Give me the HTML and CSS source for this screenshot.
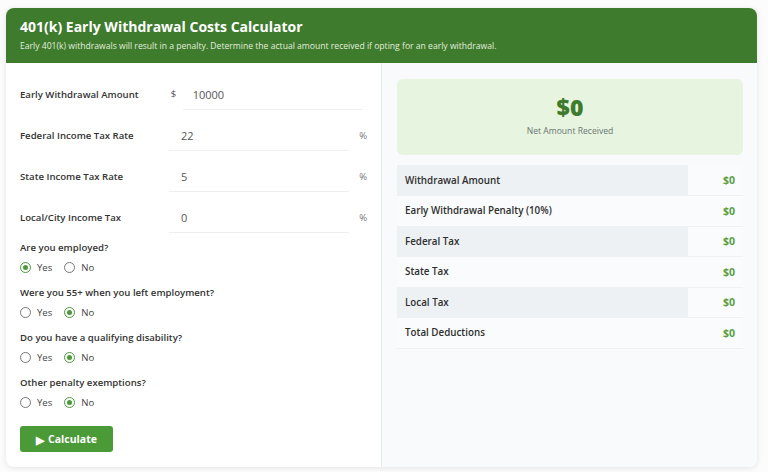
FILE: index.html
```html
<!DOCTYPE html>
<html lang="en">
<head>
<meta charset="utf-8">
<title>401(k) Early Withdrawal Costs Calculator</title>
<link rel="stylesheet" href="styles.css">
</head>
<body>
<div class="card">
  <header class="head">
    <h1 class="title">401(k) Early Withdrawal Costs Calculator</h1>
    <p class="subtitle">Early 401(k) withdrawals will result in a penalty. Determine the actual amount received if opting for an early withdrawal.</p>
  </header>
  <div class="body">
    <section class="form">
      <div class="fields">
        <div class="field">
          <label class="label">Early Withdrawal Amount</label>
          <div class="control">
            <span class="prefix">$</span>
            <input class="input first" type="text" value="10000">
          </div>
        </div>
        <div class="field">
          <label class="label">Federal Income Tax Rate</label>
          <div class="control">
            <input class="input" type="text" value="22">
            <span class="suffix">%</span>
          </div>
        </div>
        <div class="field">
          <label class="label">State Income Tax Rate</label>
          <div class="control">
            <input class="input" type="text" value="5">
            <span class="suffix">%</span>
          </div>
        </div>
        <div class="field">
          <label class="label">Local/City Income Tax</label>
          <div class="control">
            <input class="input" type="text" value="0">
            <span class="suffix">%</span>
          </div>
        </div>
      </div>

      <div class="questions">
        <div class="question">
          <div class="qlabel">Are you employed?</div>
          <div class="radios">
            <label class="radio"><span class="dot on"></span>Yes</label>
            <label class="radio"><span class="dot"></span>No</label>
          </div>
        </div>
        <div class="question">
          <div class="qlabel">Were you 55+ when you left employment?</div>
          <div class="radios">
            <label class="radio"><span class="dot"></span>Yes</label>
            <label class="radio"><span class="dot on"></span>No</label>
          </div>
        </div>
        <div class="question">
          <div class="qlabel">Do you have a qualifying disability?</div>
          <div class="radios">
            <label class="radio"><span class="dot"></span>Yes</label>
            <label class="radio"><span class="dot on"></span>No</label>
          </div>
        </div>
        <div class="question">
          <div class="qlabel">Other penalty exemptions?</div>
          <div class="radios">
            <label class="radio"><span class="dot"></span>Yes</label>
            <label class="radio"><span class="dot on"></span>No</label>
          </div>
        </div>
      </div>

      <button class="btn" type="button"><span class="play">&#9654;</span>Calculate</button>
    </section>

    <section class="results">
      <div class="summary">
        <div class="big">$0</div>
        <div class="caption">Net Amount Received</div>
      </div>
      <table class="table">
        <tr class="shade"><td class="k">Withdrawal Amount</td><td class="v">$0</td></tr>
        <tr><td class="k">Early Withdrawal Penalty (10%)</td><td class="v">$0</td></tr>
        <tr class="shade"><td class="k">Federal Tax</td><td class="v">$0</td></tr>
        <tr><td class="k">State Tax</td><td class="v">$0</td></tr>
        <tr class="shade"><td class="k">Local Tax</td><td class="v">$0</td></tr>
        <tr><td class="k">Total Deductions</td><td class="v">$0</td></tr>
      </table>
    </section>
  </div>
</div>
</body>
</html>
```

FILE: styles.css
```css
* { box-sizing: border-box; }
html, body { margin: 0; padding: 0; }
body {
  background: #fcfcfc;
  font-family: "Open Sans", "Noto Sans", sans-serif;
  color: #333;
  padding: 8px 11px 5px 6px;
}
.card {
  background: #fff;
  border-radius: 8px;
  box-shadow: 0 1px 6px rgba(0,0,0,0.10);
  overflow: hidden;
  height: 459px;
  display: flex;
  flex-direction: column;
}
.head {
  flex: 0 0 55px;
  background: #3e7b2d;
  color: #fff;
  padding: 10px 14px 0 14px;
}
.title {
  margin: 0;
  font-size: 14px;
  font-weight: 700;
  line-height: 18px;
}
.subtitle {
  margin: 4px 0 0 0;
  font-size: 8.6px;
  line-height: 12px;
  color: #e3eedd;
}
.body {
  flex: 1;
  display: flex;
  min-height: 0;
}
.form {
  width: 376px;
  padding: 11px 14px 0 14px;
  border-right: 1px solid #e6ece8;
}
.field {
  display: flex;
  align-items: center;
  height: 41px;
}
.label {
  width: 152px;
  font-size: 9.6px;
  font-weight: 600;
  color: #333;
}
.control {
  display: flex;
  align-items: center;
  width: 198px;
  height: 30px;
}
.prefix {
  width: 12px;
  font-size: 9.5px;
  color: #555;
  padding-bottom: 2px;
}
.suffix {
  width: 18px;
  text-align: right;
  font-size: 9.5px;
  color: #777;
}
.input {
  flex: 0 0 180px;
  height: 30px;
  border: 0;
  border-bottom: 1px solid #eceeef;
  background: transparent;
  font-family: inherit;
  font-size: 11px;
  color: #555;
  padding: 0 12px;
  outline: none;
}
.input.first { padding-left: 10px; }
.questions { margin-top: 3px; }
.question { height: 45px; }
.qlabel {
  font-size: 9.6px;
  font-weight: 600;
  color: #333;
  line-height: 14px;
}
.radios {
  display: flex;
  gap: 12px;
  margin-top: 6px;
  height: 12px;
}
.radio {
  display: flex;
  align-items: center;
  font-size: 9.6px;
  color: #444;
}
.dot {
  width: 11px;
  height: 11px;
  border-radius: 50%;
  border: 1px solid #777;
  background: #fff;
  margin-right: 6px;
  position: relative;
}
.dot.on { border-color: #4b9a3a; }
.dot.on::after {
  content: "";
  position: absolute;
  left: 2px; top: 2px;
  width: 5px; height: 5px;
  border-radius: 50%;
  background: #4b9a3a;
}
.btn {
  margin-top: 5px;
  width: 93px;
  height: 26px;
  border: 0;
  border-radius: 3px;
  background: #4b9a38;
  color: #fff;
  font-family: inherit;
  font-size: 10.5px;
  font-weight: 700;
  display: flex;
  align-items: center;
  justify-content: center;
  gap: 4px;
}
.play { font-size: 11px; }
.results {
  flex: 1;
  background: #f8fafb;
  padding: 16px 14px 0 15px;
}
.summary {
  background: #e6f4e0;
  border-radius: 6px;
  height: 76px;
  text-align: center;
  padding-top: 13px;
}
.big {
  font-size: 23px;
  font-weight: 800;
  color: #3e7b2d;
  line-height: 31px;
}
.caption {
  font-size: 8.6px;
  color: #6b7472;
  margin-top: 2px;
}
.table {
  width: 100%;
  margin-top: 10px;
  border-collapse: collapse;
}
.table td {
  height: 30.5px;
  border-bottom: 1px solid #eef1f3;
  font-size: 9.8px;
  padding: 0 8px;
}
.table .k { color: #2f2f2f; font-weight: 600; background: #f9fbfc; }
.table tr.shade .k { background: #eef1f4; }
.table .v {
  width: 55px;
  text-align: right;
  color: #5a9e3f;
  font-weight: 700;
  font-size: 10.5px;
  background: #f9fbfc;
}
```
